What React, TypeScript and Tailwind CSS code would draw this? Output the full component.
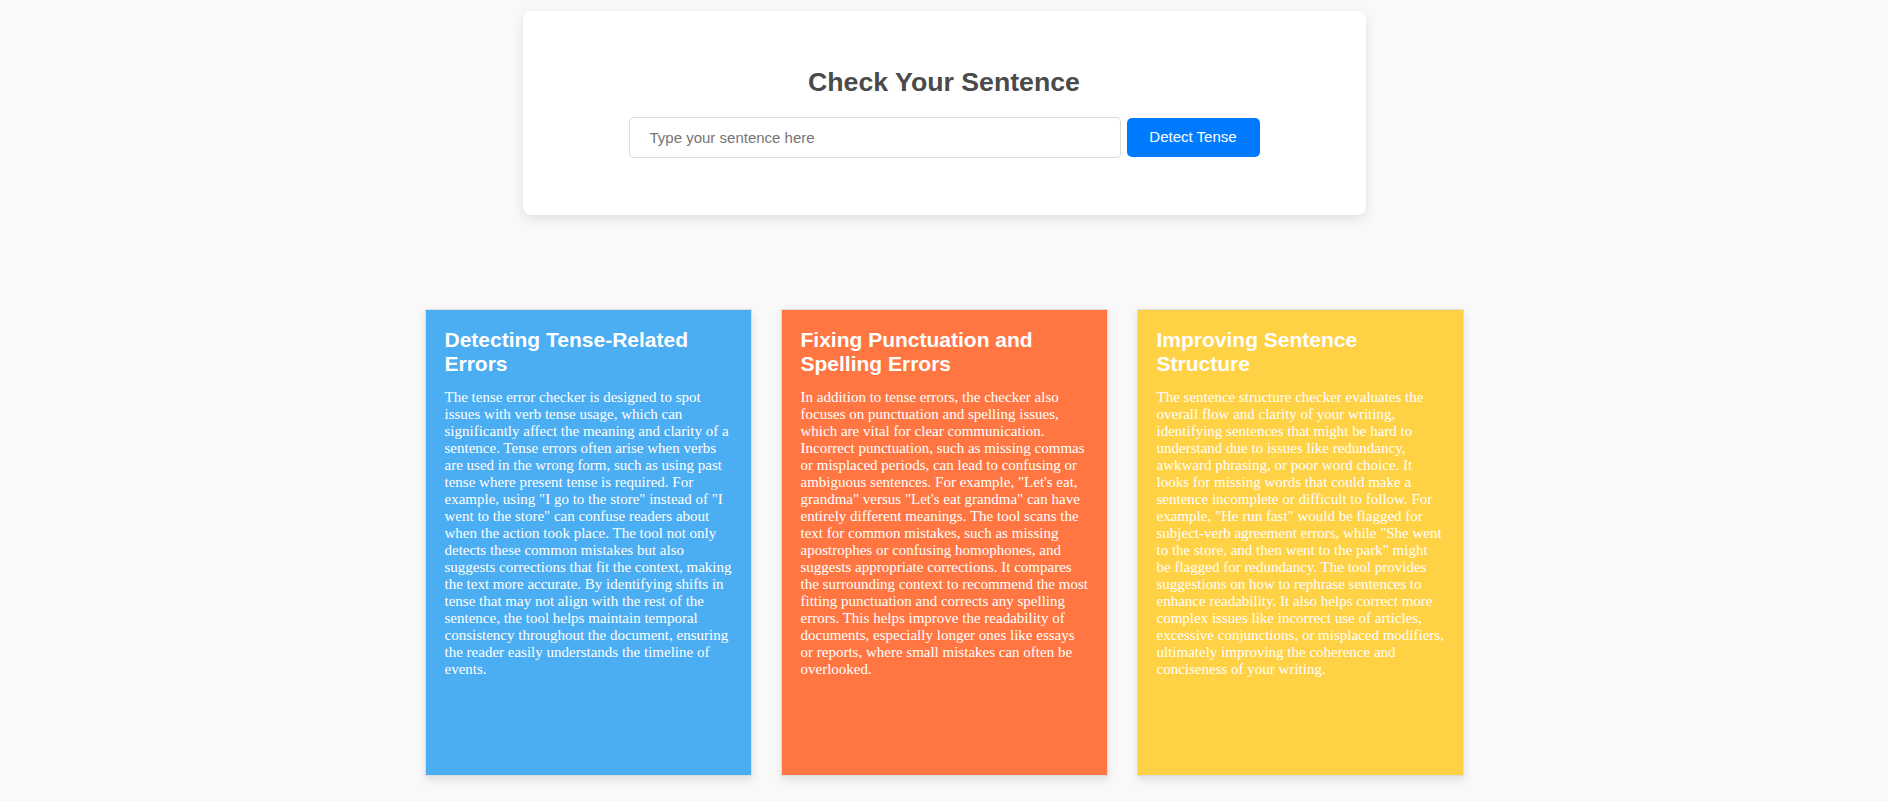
import React from "react";

const cards: { title: string; color: string; lines: string[] }[] = [
  {
    title: "Detecting Tense-Related Errors",
    color: "bg-[#4badf2]",
    lines: [
      "The tense error checker is designed to spot",
      "issues with verb tense usage, which can",
      "significantly affect the meaning and clarity of a",
      "sentence. Tense errors often arise when verbs",
      "are used in the wrong form, such as using past",
      "tense where present tense is required. For",
      'example, using "I go to the store" instead of "I',
      'went to the store" can confuse readers about',
      "when the action took place. The tool not only",
      "detects these common mistakes but also",
      "suggests corrections that fit the context, making",
      "the text more accurate. By identifying shifts in",
      "tense that may not align with the rest of the",
      "sentence, the tool helps maintain temporal",
      "consistency throughout the document, ensuring",
      "the reader easily understands the timeline of",
      "events.",
    ],
  },
  {
    title: "Fixing Punctuation and Spelling Errors",
    color: "bg-[#ff7642]",
    lines: [
      "In addition to tense errors, the checker also",
      "focuses on punctuation and spelling issues,",
      "which are vital for clear communication.",
      "Incorrect punctuation, such as missing commas",
      "or misplaced periods, can lead to confusing or",
      'ambiguous sentences. For example, "Let\'s eat,',
      'grandma" versus "Let\'s eat grandma" can have',
      "entirely different meanings. The tool scans the",
      "text for common mistakes, such as missing",
      "apostrophes or confusing homophones, and",
      "suggests appropriate corrections. It compares",
      "the surrounding context to recommend the most",
      "fitting punctuation and corrects any spelling",
      "errors. This helps improve the readability of",
      "documents, especially longer ones like essays",
      "or reports, where small mistakes can often be",
      "overlooked.",
    ],
  },
  {
    title: "Improving Sentence Structure",
    color: "bg-[#ffd145]",
    lines: [
      "The sentence structure checker evaluates the",
      "overall flow and clarity of your writing,",
      "identifying sentences that might be hard to",
      "understand due to issues like redundancy,",
      "awkward phrasing, or poor word choice. It",
      "looks for missing words that could make a",
      "sentence incomplete or difficult to follow. For",
      'example, "He run fast" would be flagged for',
      'subject-verb agreement errors, while "She went',
      'to the store, and then went to the park" might',
      "be flagged for redundancy. The tool provides",
      "suggestions on how to rephrase sentences to",
      "enhance readability. It also helps correct more",
      "complex issues like incorrect use of articles,",
      "excessive conjunctions, or misplaced modifiers,",
      "ultimately improving the coherence and",
      "conciseness of your writing.",
    ],
  },
];

export default function App() {
  return (
    <div className="min-h-[801px] bg-[#f9f9f9] font-['Liberation_Sans',Arial,sans-serif] flex flex-col items-center pt-[11px]">
      <div className="w-[843px] h-[204px] bg-white rounded-[8px] shadow-[0_4px_12px_rgba(0,0,0,0.1)] flex flex-col items-center pt-[57px]">
        <h2 className="text-[26.7px] leading-[28px] font-bold text-[#4a4a4a] m-0">
          Check Your Sentence
        </h2>
        <div className="flex items-center gap-[6px] mt-[21px]">
          <input
            type="text"
            placeholder="Type your sentence here"
            className="w-[492px] h-[41px] border border-[#dddddd] rounded-[4px] pl-[20px] pr-[10px] text-[15px] text-[#333] placeholder:text-[#757575] outline-none bg-white"
          />
          <button className="w-[133px] h-[39px] bg-[#007bff] text-white text-[15px] rounded-[5px] flex items-center justify-center">
            Detect Tense
          </button>
        </div>
      </div>

      <div className="flex gap-[29px] mt-[94px]">
        {cards.map((c) => (
          <div
            key={c.title}
            className={`w-[327px] h-[467px] ${c.color} border border-[#dddddd] shadow-[0_4px_8px_rgba(0,0,0,0.1)] pt-[18px] px-[19px] text-white`}
          >
            <h3 className="text-[21px] leading-[23.5px] font-bold m-0">{c.title}</h3>
            <p className="mt-[14px] text-[15px] leading-[17px] font-['Liberation_Serif','Times_New_Roman',serif] whitespace-nowrap">
              {c.lines.map((l, i) => (
                <React.Fragment key={i}>
                  {l}
                  {i < c.lines.length - 1 && <br />}
                </React.Fragment>
              ))}
            </p>
          </div>
        ))}
      </div>
    </div>
  );
}
